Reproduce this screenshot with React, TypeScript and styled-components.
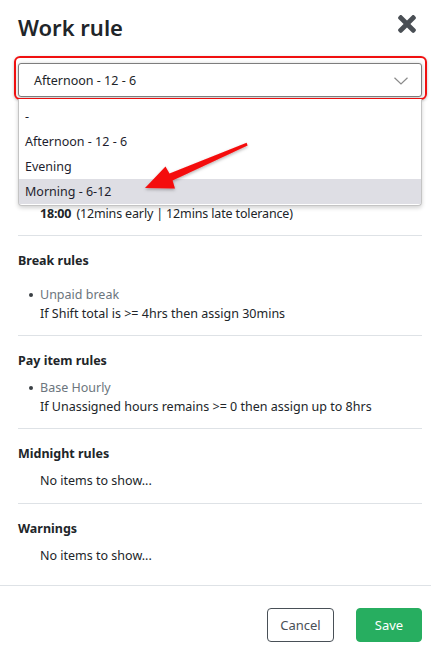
import React from "react";
import styled, { createGlobalStyle } from "styled-components";
import { FaTimes } from "react-icons/fa";

const GlobalStyle = createGlobalStyle`
  html, body { margin: 0; padding: 0; background: #ffffff; }
  body { font-family: "Noto Sans", "Open Sans", sans-serif; color: #212529; }
  * { box-sizing: border-box; }
`;

const Modal = styled.div`
  position: relative;
  width: 431px;
  height: 651px;
  display: flex;
  flex-direction: column;
  background: #fff;
  overflow: hidden;
`;

const Header = styled.header`
  display: flex;
  align-items: center;
  justify-content: space-between;
  padding: 12px 14px 0 18px;
  height: 42px;
`;

const Title = styled.h1`
  margin: 0;
  font-size: 22px;
  line-height: 30px;
  font-weight: 600;
  color: #212529;
`;

const CloseButton = styled.button`
  border: 0;
  background: transparent;
  padding: 0;
  width: 20px;
  height: 20px;
  display: flex;
  align-items: center;
  justify-content: center;
  color: #4a4f55;
  cursor: pointer;
  margin-top: -6px;
`;

const Body = styled.main`
  flex: 1;
  padding: 0 9px 0 18px;
  display: flex;
  flex-direction: column;
`;

const SelectWrap = styled.div`
  position: relative;
  margin-top: 21px;
`;

const SelectBox = styled.div`
  height: 34px;
  border: 1px solid #7d7d7d;
  border-radius: 3px;
  background: #fff;
  display: flex;
  align-items: center;
  justify-content: space-between;
  padding: 1px 13px 0 15px;
  font-size: 12.5px;
  color: #212529;
  box-shadow: 0 1px 4px rgba(0, 0, 0, 0.25);
`;

const Highlight = styled.div`
  position: absolute;
  top: -7px;
  left: -4px;
  right: -5px;
  bottom: -3px;
  border: 2px solid #f01010;
  border-radius: 6px;
  box-shadow: 0 1px 3px rgba(0, 0, 0, 0.25);
  pointer-events: none;
`;

const Dropdown = styled.ul`
  position: absolute;
  top: calc(100% + 2px);
  left: 0;
  right: 0;
  margin: 0;
  padding: 5px 0 1px;
  list-style: none;
  background: #fff;
  border: 1px solid #c4c4c4;
  border-top: 0;
  border-radius: 0 0 4px 4px;
  box-shadow: 0 2px 4px rgba(0, 0, 0, 0.18);
  z-index: 2;
`;

const Option = styled.li<{ $active?: boolean }>`
  height: 25px;
  line-height: 25px;
  padding-left: 6px;
  font-size: 12.5px;
  color: #1e1e2e;
  background: ${(p) => (p.$active ? "#dedee4" : "transparent")};
`;

const Section = styled.section<{ $first?: boolean; $empty?: boolean }>`
  border-top: ${(p) => (p.$first ? "0" : "1px solid #dee2e6")};
  padding: ${(p) => (p.$first ? "107px" : "15px")} 0 ${(p) => (p.$empty ? "13px" : "12px")};
`;

const Heading = styled.h3`
  margin: 0;
  font-size: 12.5px;
  line-height: 20px;
  font-weight: 700;
  color: #212529;
`;

const RuleList = styled.ul<{ $gap: number }>`
  margin: ${(p) => p.$gap}px 0 0;
  padding: 0 0 0 22px;
  list-style: none;
`;

const RuleItem = styled.li<{ $plain?: boolean }>`
  position: relative;
  font-size: 12.5px;
  line-height: 19px;
  &::before {
    content: "";
    display: ${(p) => (p.$plain ? "none" : "block")};
    position: absolute;
    left: -11px;
    top: 8px;
    width: 4px;
    height: 4px;
    border-radius: 50%;
    background: #3a3f44;
  }
`;

const RuleName = styled.div`
  color: #6c757d;
`;

const RuleText = styled.div<{ $tight?: boolean }>`
  color: #212529;
  letter-spacing: ${(p) => (p.$tight ? "-0.15px" : "0")};
`;

const Strong = styled.b`
  font-weight: 700;
  margin-right: 5px;
`;

const Empty = styled.p`
  margin: 7px 0 0 22px;
  font-size: 12.5px;
  line-height: 19px;
  color: #212529;
`;

const Footer = styled.footer`
  border-top: 1px solid #dee2e6;
  padding: 22px 9px 9px 0;
  display: flex;
  justify-content: flex-end;
  gap: 22px;
`;

const Button = styled.button<{ $primary?: boolean }>`
  height: 34px;
  width: ${(p) => (p.$primary ? "66px" : "67px")};
  border-radius: 4px;
  font-family: inherit;
  font-size: 13px;
  border: 1px solid ${(p) => (p.$primary ? "#27ae60" : "#495057")};
  background: ${(p) => (p.$primary ? "#27ae60" : "#fff")};
  color: ${(p) => (p.$primary ? "#fff" : "#495057")};
  cursor: pointer;
`;

const ArrowSvg = styled.svg`
  position: absolute;
  left: 0;
  top: 0;
  pointer-events: none;
  z-index: 5;
`;

const Chevron = () => (
  <svg width="14" height="8" viewBox="0 0 14 8">
    <polyline points="0.5,0.8 7,7 13.5,0.8" fill="none" stroke="#8a8a8a" strokeWidth="1.2" />
  </svg>
);

export default function App() {
  return (
    <>
      <GlobalStyle />
      <Modal>
        <Header>
          <Title>Work rule</Title>
          <CloseButton aria-label="Close">
            <FaTimes size={26} />
          </CloseButton>
        </Header>
        <Body>
          <SelectWrap>
            <SelectBox>
              <span>Afternoon - 12 - 6</span>
              <Chevron />
            </SelectBox>
            <Highlight />
            <Dropdown>
              <Option>-</Option>
              <Option>Afternoon - 12 - 6</Option>
              <Option>Evening</Option>
              <Option $active>Morning - 6-12</Option>
            </Dropdown>
          </SelectWrap>

          <Section $first>
            <RuleList $gap={0}>
              <RuleItem $plain>
                <RuleText $tight>
                  <Strong>18:00</Strong>(12mins early | 12mins late tolerance)
                </RuleText>
              </RuleItem>
            </RuleList>
          </Section>

          <Section>
            <Heading>Break rules</Heading>
            <RuleList $gap={14}>
              <RuleItem>
                <RuleName>Unpaid break</RuleName>
                <RuleText>If Shift total is &gt;= 4hrs then assign 30mins</RuleText>
              </RuleItem>
            </RuleList>
          </Section>

          <Section>
            <Heading>Pay item rules</Heading>
            <RuleList $gap={7}>
              <RuleItem>
                <RuleName>Base Hourly</RuleName>
                <RuleText>If Unassigned hours remains &gt;= 0 then assign up to 8hrs</RuleText>
              </RuleItem>
            </RuleList>
          </Section>

          <Section $empty>
            <Heading>Midnight rules</Heading>
            <Empty>No items to show...</Empty>
          </Section>

          <Section $empty>
            <Heading>Warnings</Heading>
            <Empty>No items to show...</Empty>
          </Section>
        </Body>
        <Footer>
          <Button>Cancel</Button>
          <Button $primary>Save</Button>
        </Footer>

        <ArrowSvg width="431" height="651" viewBox="0 0 431 651">
          <defs>
            <filter id="arrowShadow" x="-20%" y="-20%" width="140%" height="160%">
              <feDropShadow dx="0" dy="1.5" stdDeviation="1.5" floodColor="#000" floodOpacity="0.3" />
            </filter>
          </defs>
          <polygon
            points="145,188 165.5,166.5 169.5,173.5 246.6,142.8 247.6,145.4 172.6,180.6 175,188.6"
            fill="#f40c0c"
            filter="url(#arrowShadow)"
          />
        </ArrowSvg>
      </Modal>
    </>
  );
}
